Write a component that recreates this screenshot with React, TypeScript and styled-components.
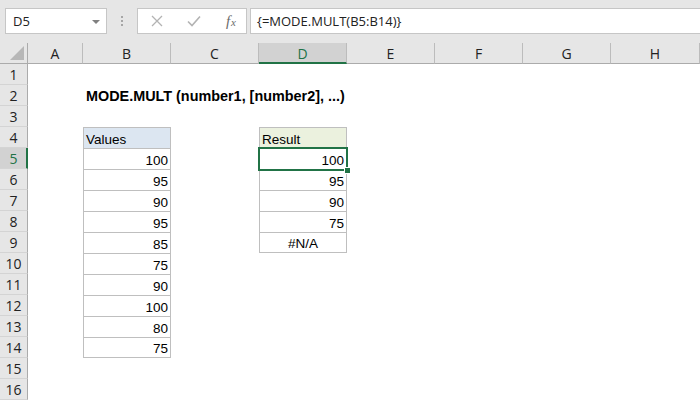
import styled, { createGlobalStyle } from 'styled-components';

const GlobalStyle = createGlobalStyle`
  html, body {
    margin: 0;
    padding: 0;
    background: #ffffff;
    overflow: hidden;
  }
  body {
    font-family: 'Liberation Sans', Arial, sans-serif;
  }
`;

const GREEN = '#217346';
const COLS = ['A', 'B', 'C', 'D', 'E', 'F', 'G', 'H'];
const VALUES = [100, 95, 90, 95, 85, 75, 90, 100, 80, 75];
const RESULTS = ['100', '95', '90', '75', '#N/A'];
const ROWS = Array.from({ length: 16 }, (_, i) => i + 1);

export default function App() {
  return (
    <Window>
      <GlobalStyle />
      <Toolbar>
        <NameBox>
          <span>D5</span>
          <DropArrow />
        </NameBox>
        <Grip>
          <i />
          <i />
          <i />
        </Grip>
        <FormulaButtons>
          <svg width="12" height="12" viewBox="0 0 12 12">
            <path d="M1 1 L11 11 M11 1 L1 11" stroke="#b3b3b3" strokeWidth="1.3" fill="none" />
          </svg>
          <svg width="14" height="12" viewBox="0 0 14 12">
            <path d="M1 6.5 L5 10.5 L13 1.5" stroke="#b3b3b3" strokeWidth="1.6" fill="none" />
          </svg>
          <FxLabel>
            f<sub>x</sub>
          </FxLabel>
        </FormulaButtons>
        <FormulaInput>{'{=MODE.MULT(B5:B14)}'}</FormulaInput>
      </Toolbar>

      <Sheet>
        <Corner>
          <svg width="14" height="14" viewBox="0 0 14 14">
            <path d="M14 0 L14 14 L0 14 Z" fill="#b7b7b7" />
          </svg>
        </Corner>
        {COLS.map((c) => (
          <ColHead key={c} $active={c === 'D'}>
            {c}
          </ColHead>
        ))}

        {ROWS.map((r) => (
          <RowCells key={r} r={r} />
        ))}
      </Sheet>
    </Window>
  );
}

function RowCells({ r }: { r: number }) {
  const cells = [];
  cells.push(
    <RowHead key="h" $active={r === 5}>
      {r}
    </RowHead>
  );

  COLS.forEach((c) => {
    const key = c + r;
    if (r === 2 && c === 'B') {
      cells.push(<Title key={key}>MODE.MULT (number1, [number2], ...)</Title>);
      return;
    }
    if (r === 2 && (c === 'C' || c === 'D' || c === 'E')) return;

    if (c === 'B' && r >= 4 && r <= 14) {
      if (r === 4) {
        cells.push(
          <TableCell key={key} $fill="#dce6f1">
            Values
          </TableCell>
        );
      } else {
        cells.push(
          <TableCell key={key} $align="right" $last={r === 14}>
            {VALUES[r - 5]}
          </TableCell>
        );
      }
      return;
    }

    if (c === 'D' && r >= 4 && r <= 9) {
      if (r === 4) {
        cells.push(
          <TableCell key={key} $fill="#ebf1de">
            Result
          </TableCell>
        );
      } else {
        const v = RESULTS[r - 5];
        cells.push(
          <TableCell key={key} $align={v === '#N/A' ? 'center' : 'right'} $last={r === 9}>
            {v}
            {r === 5 && (
              <Selection>
                <FillHandle />
              </Selection>
            )}
          </TableCell>
        );
      }
      return;
    }

    cells.push(<Blank key={key} />);
  });

  return <>{cells}</>;
}

const Window = styled.div`
  width: 700px;
  height: 400px;
  background: #ffffff;
  overflow: hidden;
`;

const Toolbar = styled.div`
  height: 43px;
  background: #e6e6e6;
  display: flex;
  align-items: flex-start;
  padding: 8px 0 0 5px;
  box-sizing: border-box;
  font-family: 'Open Sans', 'Noto Sans', sans-serif;
  font-size: 13px;
  color: #222;
`;

const NameBox = styled.div`
  width: 102px;
  height: 26px;
  box-sizing: border-box;
  background: #ffffff;
  border: 1px solid #c6c6c6;
  display: flex;
  align-items: center;
  justify-content: space-between;
  padding: 0 6px 0 7px;
`;

const DropArrow = styled.span`
  width: 0;
  height: 0;
  border-left: 4px solid transparent;
  border-right: 4px solid transparent;
  border-top: 4px solid #808080;
  margin-top: 1px;
`;

const Grip = styled.div`
  width: 30px;
  height: 26px;
  display: flex;
  flex-direction: column;
  align-items: center;
  justify-content: center;
  gap: 2px;

  i {
    display: block;
    width: 2px;
    height: 2px;
    background: #a6a6a6;
  }
`;

const FormulaButtons = styled.div`
  width: 110px;
  height: 26px;
  box-sizing: border-box;
  background: #ffffff;
  border: 1px solid #c6c6c6;
  display: flex;
  align-items: center;
  justify-content: space-between;
  padding: 0 10px 0 13px;
`;

const FxLabel = styled.span`
  font-family: 'Liberation Serif', 'DejaVu Serif', serif;
  font-style: italic;
  font-size: 15px;
  color: #6b6b6b;
  line-height: 1;

  sub {
    font-size: 11px;
    vertical-align: 0;
    margin-left: 1px;
  }
`;

const FormulaInput = styled.div`
  flex: 1;
  height: 26px;
  box-sizing: border-box;
  background: #ffffff;
  border: 1px solid #c6c6c6;
  border-right: none;
  margin-left: 3px;
  display: flex;
  align-items: center;
  padding-left: 6px;
  color: #222;
`;

const Sheet = styled.div`
  display: grid;
  grid-template-columns: 28px 55px repeat(6, 88px) 1fr;
  grid-template-rows: 21px repeat(16, 21px);
  font-size: 13.5px;
  color: #000;
`;

const HeaderBase = styled.div`
  box-sizing: border-box;
  background: #e6e6e6;
  font-family: 'Open Sans', 'Noto Sans', sans-serif;
  font-size: 14px;
  color: #222;
  display: flex;
  align-items: center;
  justify-content: center;
`;

const Corner = styled(HeaderBase)`
  border-right: 1px solid #ababab;
  border-bottom: 1px solid #ababab;
  align-items: flex-end;
  justify-content: flex-end;
  padding: 0 3px 3px 0;
`;

const ColHead = styled(HeaderBase)<{ $active?: boolean }>`
  background: ${(p) => (p.$active ? '#d2d2d2' : '#e6e6e6')};
  color: ${(p) => (p.$active ? GREEN : '#222')};
  border-right: 1px solid #bcbcbc;
  border-bottom: ${(p) => (p.$active ? `2px solid ${GREEN}` : '1px solid #ababab')};
  padding-top: ${(p) => (p.$active ? '1px' : '0')};
`;

const RowHead = styled(HeaderBase)<{ $active?: boolean }>`
  background: ${(p) => (p.$active ? '#d2d2d2' : '#e6e6e6')};
  color: ${(p) => (p.$active ? GREEN : '#222')};
  border-bottom: 1px solid #d4d4d4;
  border-right: ${(p) => (p.$active ? `2px solid ${GREEN}` : '1px solid #ababab')};
  padding-left: ${(p) => (p.$active ? '1px' : '0')};
`;

const Blank = styled.div``;

const Title = styled.div`
  grid-column: span 4;
  font-weight: bold;
  font-size: 14.4px;
  white-space: nowrap;
  display: flex;
  align-items: flex-end;
  padding: 0 0 3px 3px;
  line-height: 1;
`;

const TableCell = styled.div<{ $fill?: string; $align?: 'left' | 'right' | 'center'; $last?: boolean }>`
  position: relative;
  box-sizing: border-box;
  background: ${(p) => p.$fill || '#ffffff'};
  border: 1px solid #bfbfbf;
  border-bottom: ${(p) => (p.$last ? '1px solid #bfbfbf' : 'none')};
  display: flex;
  align-items: flex-end;
  justify-content: ${(p) =>
    p.$align === 'right' ? 'flex-end' : p.$align === 'center' ? 'center' : 'flex-start'};
  padding: 0 2px 2px 2px;
  line-height: 1;
  white-space: nowrap;
`;

const Selection = styled.div`
  position: absolute;
  z-index: 2;
  top: -2px;
  left: -2px;
  right: -2px;
  bottom: -2px;
  border: 2px solid ${GREEN};
  pointer-events: none;
`;

const FillHandle = styled.div`
  position: absolute;
  right: -5px;
  bottom: -5px;
  width: 5px;
  height: 5px;
  background: ${GREEN};
  border: 1px solid #ffffff;
`;
